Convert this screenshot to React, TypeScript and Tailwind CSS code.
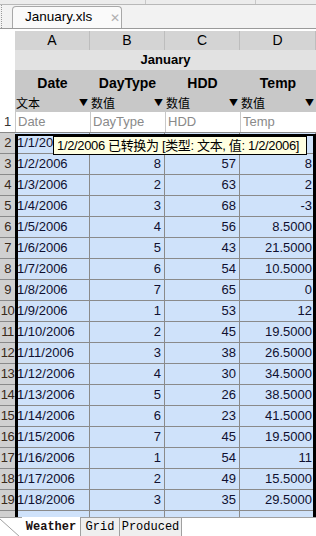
import React from 'react'

const rows = [
  ['1/1/20', '', '', ''],
  ['1/2/2006', '8', '57', '8'],
  ['1/3/2006', '2', '63', '2'],
  ['1/4/2006', '3', '68', '-3'],
  ['1/5/2006', '4', '56', '8.5000'],
  ['1/6/2006', '5', '43', '21.5000'],
  ['1/7/2006', '6', '54', '10.5000'],
  ['1/8/2006', '7', '65', '0'],
  ['1/9/2006', '1', '53', '12'],
  ['1/10/2006', '2', '45', '19.5000'],
  ['1/11/2006', '3', '38', '26.5000'],
  ['1/12/2006', '4', '30', '34.5000'],
  ['1/13/2006', '5', '26', '38.5000'],
  ['1/14/2006', '6', '23', '41.5000'],
  ['1/15/2006', '7', '45', '19.5000'],
  ['1/16/2006', '1', '54', '11'],
  ['1/17/2006', '2', '49', '15.5000'],
  ['1/18/2006', '3', '35', '29.5000'],
]

const cols = ['A', 'B', 'C', 'D']
const heads = ['Date', 'DayType', 'HDD', 'Temp']
const types = ['文本', '数值', '数值', '数值']

function Arrow() {
  return <span className="text-[9px] leading-none text-black">▼</span>
}

export default function App() {
  return (
    <div className="w-[316px] h-[536px] overflow-hidden bg-white text-[13px] text-black" style={{ fontFamily: '"Liberation Sans", "Noto Sans CJK SC", sans-serif' }}>
      {/* top strip */}
      <div className="h-[5px] bg-[#ececec] border-b border-[#b8b8b8] flex">
        <div className="w-[146px] border-r border-[#c8c8c8]" />
        <div className="w-[110px] border-r border-[#c8c8c8]" />
      </div>

      {/* document tab bar */}
      <div className="h-[24px] bg-[#f2f2f2] border-b border-[#9a9a9a] flex items-end">
        <div className="w-[3px] h-full border-l border-dotted border-[#999] ml-[1px]" />
        <div className="ml-[8px] w-[110px] h-[22px] bg-[#fafafa] border border-b-0 border-[#a8a8a8] rounded-t-[4px] flex items-center pl-[12px] gap-[18px]">
          <span className="text-[13.5px]">January.xls</span>
          <span className="text-[#b0b0b0] text-[12px]">✕</span>
        </div>
      </div>
      <div className="h-[2px]" />

      <div className="relative">
        {/* column letters */}
        <div className="flex h-[19px]">
          <div className="w-[15px] bg-white" />
          {cols.map((c, i) => (
            <div key={c} className={`flex-none ${i === 3 ? 'w-[76px]' : 'w-[75px]'} bg-[#d4d4d4] border-r border-[#bdbdbd] flex items-center justify-center text-[14px]`}>
              {c}
            </div>
          ))}
        </div>

        {/* January title */}
        <div className="flex h-[20px]">
          <div className="w-[15px] bg-white" />
          <div className="w-[301px] bg-[#e2e2e2] flex items-center justify-center font-bold">January</div>
        </div>

        {/* field names + types */}
        <div className="flex">
          <div className="w-[15px] bg-white" />
          {heads.map((h, i) => (
            <div key={h} className={`flex-none ${i === 3 ? 'w-[76px]' : 'w-[75px]'} bg-[#c8c8c8] flex flex-col`}>
              <div className="h-[23px] flex items-center justify-center font-bold text-[14px] pt-[3px]">{h}</div>
              <div className="h-[19px] flex items-center justify-between pl-[1px] pr-[2px] text-[12px]" style={{ fontFamily: '"Noto Sans CJK SC", sans-serif' }}>
                <span>{types[i]}</span>
                <Arrow />
              </div>
            </div>
          ))}
        </div>

        {/* row 1 */}
        <div className="flex h-[21px] border-b border-[#8a8a8a]">
          <div className="w-[15px] flex items-center justify-center text-[#333]">1</div>
          {heads.map((h, i) => (
            <div key={h} className={`flex-none ${i === 3 ? 'w-[76px]' : 'w-[75px]'} border-l border-[#c8c8c8] flex items-center pl-[2px] text-[#8a8a8a]`}>
              {h}
            </div>
          ))}
        </div>

        {/* data rows */}
        {rows.map((r, ri) => (
          <div key={ri} className="flex h-[21px] border-b border-[#8a8a8a]">
            <div className="w-[15px] bg-[#d0d0d0] flex items-center justify-center text-[#3a2a1a] tracking-[-0.5px]">{ri + 2}</div>
            {r.map((v, ci) => (
              <div
                key={ci}
                className={`flex-none ${ci === 3 ? 'w-[76px]' : 'w-[75px]'} bg-[#cfe2fa] border-r border-[#8a8a8a] flex items-center text-[#101030] ${ci === 0 ? 'justify-start pl-[2px]' : 'justify-end pr-[3px]'}`}
              >
                {v}
              </div>
            ))}
          </div>
        ))}
        <div className="flex h-[6px]">
          <div className="w-[15px] bg-[#d0d0d0]" />
          {cols.map((c, i) => (
            <div key={c} className={`flex-none ${i === 3 ? 'w-[76px]' : 'w-[75px]'} bg-[#cfe2fa] border-r border-[#8a8a8a]`} />
          ))}
        </div>

        {/* selection border */}
        <div className="absolute left-[15px] top-[103px] right-0 h-[386px] border-l-[3px] border-t-2 border-r-[3px] border-black pointer-events-none" />

        {/* tooltip */}
        <div className="absolute left-[53px] top-[105px] w-[254px] h-[19px] bg-[#ffffe1] border border-black flex items-center pl-[3px] whitespace-nowrap overflow-hidden text-[13px] tracking-[-0.35px]">
          1/2/2006 已转换为 [类型: 文本, 值: 1/2/2006]
        </div>
      </div>

      {/* sheet tabs */}
      <div className="relative h-[19px] flex items-stretch border-t border-[#a0a0a0] bg-white text-[12px]" style={{ fontFamily: '"Liberation Mono", monospace' }}>
        <svg className="absolute left-0 top-0" width="22" height="19" viewBox="0 0 22 19">
          <line x1="0" y1="1" x2="20" y2="19" stroke="#a0a0a0" strokeWidth="1" />
        </svg>
        <div className="ml-[22px] w-[59px] -mt-px bg-white border-r border-[#a0a0a0] flex items-center justify-center font-bold text-[#1a1010]">Weather</div>
        <div className="w-[39px] bg-[#efefef] border-r border-[#a0a0a0] flex items-center justify-center">Grid</div>
        <div className="w-[62px] bg-[#efefef] border-r border-[#a0a0a0] flex items-center justify-center">Produced</div>
      </div>
    </div>
  )
}
